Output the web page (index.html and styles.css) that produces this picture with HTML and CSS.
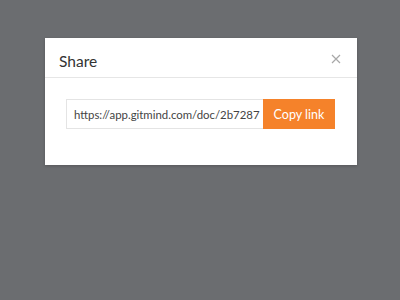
FILE: index.html
```html
<!DOCTYPE html>
<html>
<head>
<meta charset="utf-8">
<link rel="stylesheet" href="styles.css">
</head>
<body>
<div class="overlay">
  <div class="dialog">
    <div class="header">
      <span class="title">Share</span>
      <span class="close">
        <svg width="10" height="10" viewBox="0 0 10 10"><path d="M1 1L9 9M9 1L1 9" stroke="#a8a8a8" stroke-width="1.2" fill="none"/></svg>
      </span>
    </div>
    <div class="body">
      <div class="link-row">
        <div class="link-input">https://app.gitmind.com/doc/2b7287</div>
        <div class="copy-btn">Copy link</div>
      </div>
    </div>
  </div>
</div>
</body>
</html>
```
FILE: styles.css
```css
html, body {
  margin: 0;
  padding: 0;
  width: 400px;
  height: 300px;
  background: #6b6d70;
  font-family: "Lato", "Liberation Sans", sans-serif;
}
.overlay {
  padding-top: 38px;
  padding-left: 45px;
}
.dialog {
  width: 312px;
  height: 127px;
  background: #fff;
  box-shadow: 0 1px 3px rgba(0,0,0,0.2);
  display: flex;
  flex-direction: column;
}
.header {
  height: 40px;
  border-bottom: 1px solid #e6e6e6;
  display: flex;
  align-items: center;
  justify-content: space-between;
  padding: 0 16px 0 14px;
  box-sizing: border-box;
}
.title {
  font-size: 15.5px;
  color: #333;
  margin-top: 6px;
}
.close {
  display: flex;
  margin-top: 2px;
}
.body {
  padding: 21px 0 0 21px;
}
.link-row {
  display: flex;
  height: 30px;
}
.link-input {
  width: 197px;
  border: 1px solid #e4e4e4;
  border-right: none;
  box-sizing: border-box;
  font-size: 11.4px;
  color: #444;
  display: flex;
  align-items: center;
  padding-left: 7px;
  white-space: nowrap;
  overflow: hidden;
}
.copy-btn {
  width: 72px;
  background: #f5822a;
  color: #fff;
  font-size: 12.5px;
  display: flex;
  align-items: center;
  justify-content: center;
}
```
